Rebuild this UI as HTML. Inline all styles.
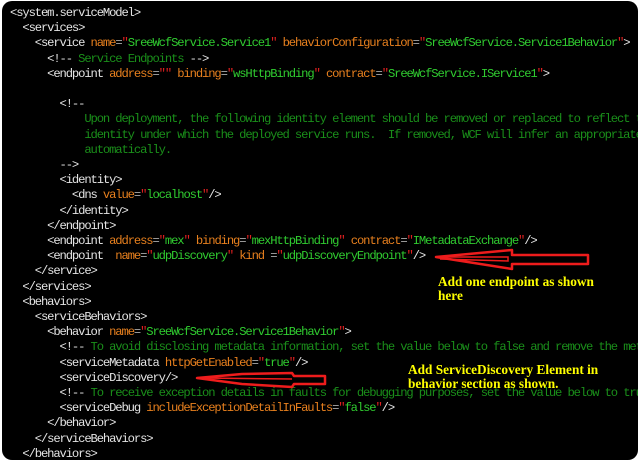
<!DOCTYPE html>
<html><head><meta charset="utf-8"><style>
html,body{margin:0;padding:0;background:#fff;width:640px;height:466px;overflow:hidden}
#box{position:absolute;left:2px;top:1px;width:636px;height:459px;background:#000;border-radius:10px;overflow:hidden}
pre{position:absolute;left:8px;top:5px;margin:0;font-family:"Liberation Mono",monospace;font-size:12.2px;letter-spacing:-1.12px;line-height:15.2px;color:#e4e4e4;white-space:pre}
.a{color:#e8801e}.v{color:#30cc30}.q{color:#e02020}.c{color:#1a8f1a}.e{color:#aaa}
.note{position:absolute;font-family:"Liberation Serif",serif;font-weight:bold;font-size:13.3px;color:#ffff00;line-height:13.5px}
svg{position:absolute;left:0;top:0}
</style></head><body><div id="box">
<pre>&lt;system.serviceModel&gt;
  &lt;services&gt;
    &lt;service <span class="a">name</span><span class="e">=</span><span class="q">"</span><span class="v">SreeWcfService.Service1</span><span class="q">"</span> <span class="a">behaviorConfiguration</span><span class="e">=</span><span class="q">"</span><span class="v">SreeWcfService.Service1Behavior</span><span class="q">"</span>&gt;
      &lt;!-- <span class="c">Service Endpoints</span> --&gt;
      &lt;endpoint <span class="a">address</span><span class="e">=</span><span class="q">""</span> <span class="a">binding</span><span class="e">=</span><span class="q">"</span><span class="v">wsHttpBinding</span><span class="q">"</span> <span class="a">contract</span><span class="e">=</span><span class="q">"</span><span class="v">SreeWcfService.IService1</span><span class="q">"</span>&gt;

        &lt;!--
<span class="c">            Upon deployment, the following identity element should be removed or replaced to reflect the
            identity under which the deployed service runs.  If removed, WCF will infer an appropriate identity
            automatically.</span>
        --&gt;
        &lt;identity&gt;
          &lt;dns <span class="a">value</span><span class="e">=</span><span class="q">"</span><span class="v">localhost</span><span class="q">"</span>/&gt;
        &lt;/identity&gt;
      &lt;/endpoint&gt;
      &lt;endpoint <span class="a">address</span><span class="e">=</span><span class="q">"</span><span class="v">mex</span><span class="q">"</span> <span class="a">binding</span><span class="e">=</span><span class="q">"</span><span class="v">mexHttpBinding</span><span class="q">"</span> <span class="a">contract</span><span class="e">=</span><span class="q">"</span><span class="v">IMetadataExchange</span><span class="q">"</span>/&gt;
      &lt;endpoint  <span class="a">name</span><span class="e">=</span><span class="q">"</span><span class="v">udpDiscovery</span><span class="q">"</span> <span class="a">kind</span> <span class="e">=</span><span class="q">"</span><span class="v">udpDiscoveryEndpoint</span><span class="q">"</span>/&gt;
    &lt;/service&gt;
  &lt;/services&gt;
  &lt;behaviors&gt;
    &lt;serviceBehaviors&gt;
      &lt;behavior <span class="a">name</span><span class="e">=</span><span class="q">"</span><span class="v">SreeWcfService.Service1Behavior</span><span class="q">"</span>&gt;
        &lt;!-- <span class="c">To avoid disclosing metadata information, set the value below to false and remove the metadata</span>
        &lt;serviceMetadata <span class="a">httpGetEnabled</span><span class="e">=</span><span class="q">"</span><span class="v">true</span><span class="q">"</span>/&gt;
        &lt;serviceDiscovery/&gt;
        &lt;!-- <span class="c">To receive exception details in faults for debugging purposes, set the value below to true</span>
        &lt;serviceDebug <span class="a">includeExceptionDetailInFaults</span><span class="e">=</span><span class="q">"</span><span class="v">false</span><span class="q">"</span>/&gt;
      &lt;/behavior&gt;
    &lt;/serviceBehaviors&gt;
  &lt;/behaviors&gt;</pre>
<svg width="636" height="459">
<path d="M434 256 L510 249 L510 254 L586 254 L586 263 L510 263 L510 268 Z" fill="none" stroke="#ee1c1c" stroke-width="2.5" stroke-linejoin="round"/>
<path d="M438 256 L506 256 L506 260 L438 258" fill="none" stroke="#ee1c1c" stroke-width="1.5"/>
<path d="M195 377 L240 373 L290 372 L292 375 L323 375 L323 383 L292 383 L290 386 L240 383 Z" fill="none" stroke="#ee1c1c" stroke-width="2.5" stroke-linejoin="round"/>
<path d="M200 377 L290 378" fill="none" stroke="#ee1c1c" stroke-width="1.5"/>
</svg>
<div class="note" style="left:436px;top:274px">Add one endpoint as shown<br>here</div>
<div class="note" style="left:406px;top:362px">Add ServiceDiscovery Element in<br>behavior section as shown.</div>
</div></body></html>
